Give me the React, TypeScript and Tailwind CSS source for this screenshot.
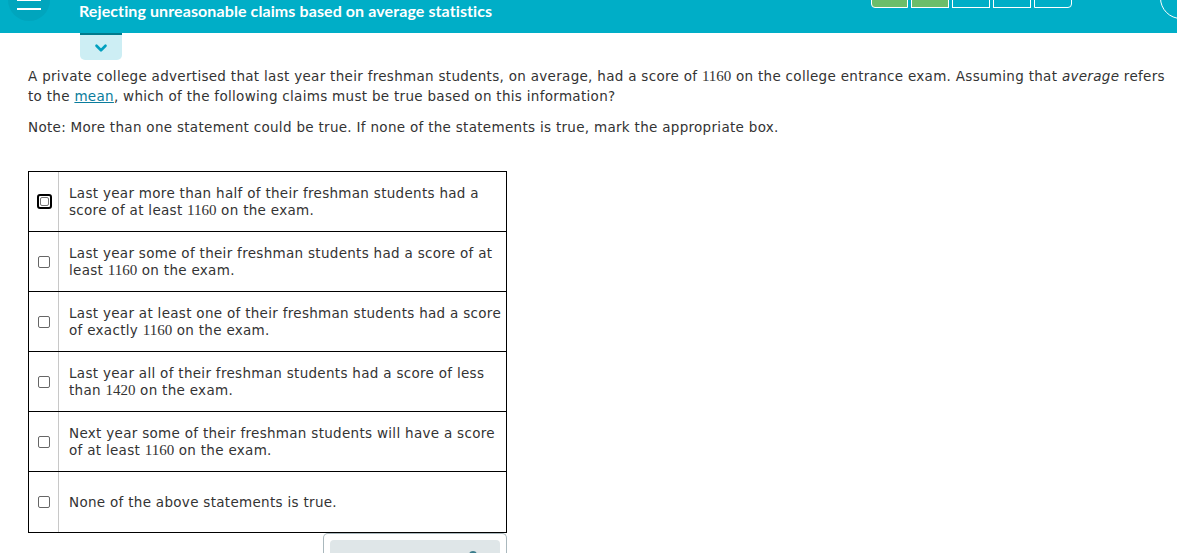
import { Fragment } from "react";
import { ChevronDown } from "lucide-react";

const choices = [
  { text: ["Last year more than half of their freshman students had a score of at least ", "1160", " on the exam."], focused: true },
  { text: ["Last year some of their freshman students had a score of at least ", "1160", " on the exam."] },
  { text: ["Last year at least one of their freshman students had a score of exactly ", "1160", " on the exam."] },
  { text: ["Last year all of their freshman students had a score of less than ", "1420", " on the exam."] },
  { text: ["Next year some of their freshman students will have a score of at least ", "1160", " on the exam."] },
  { text: ["None of the above statements is true."] },
];

const Num = ({ children }: { children: string }) => (
  <span className="font-['Liberation_Serif',serif] text-[15px] leading-none tracking-normal">{children}</span>
);

export default function App() {
  return (
    <div className="h-[553px] overflow-hidden bg-white font-['DejaVu_Sans','Verdana',sans-serif] text-[#333]">
      <header className="relative flex h-[33px] items-start overflow-hidden bg-[#00aec7]">
        <div className="ml-[8px] -mt-[21px] flex h-[42px] w-[42px] shrink-0 flex-col items-center justify-end gap-[7px] rounded-full bg-[#00a5bd] pb-[11px]">
          <span className="h-[2px] w-[24px] bg-white" />
          <span className="h-[2px] w-[24px] bg-white" />
        </div>
        <h1 className="ml-[29px] mt-[0px] font-['Lato',sans-serif] text-[16px] font-bold leading-[21px] tracking-[0.1px] text-white">
          Rejecting unreasonable claims based on average statistics
        </h1>
        <div className="ml-auto -mt-[1px] flex gap-[3px]">
          <span className="h-[9px] w-[37px] rounded-bl-[4px] border border-white bg-[#6bbe6a]" />
          <span className="h-[9px] w-[38px] border border-white bg-[#6bbe6a]" />
          <span className="h-[9px] w-[38px] border border-white" />
          <span className="h-[9px] w-[38px] border border-white" />
          <span className="h-[9px] w-[38px] rounded-br-[4px] border border-white" />
        </div>
        <div className="-mt-[23px] ml-[88px] -mr-[25px] h-[42px] w-[42px] shrink-0 rounded-full border border-white" />
      </header>

      <div className="ml-[80px] flex h-[27px] w-[42px] items-center justify-center rounded-b-[5px] border-t-2 border-[#007a8c] bg-[#cdeef4] text-[#00a0bf]">
        <ChevronDown size={18} strokeWidth={3.5} />
      </div>

      <div className="pl-[28px] pr-[4px] pt-[6px] text-[13.5px] leading-[20px] tracking-[0.3px]">
        <p>
          A private college advertised that last year their freshman students, on average, had a score of <Num>1160</Num> on
          the college entrance exam. Assuming that <i>average</i> refers to the{" "}
          <span className="text-[#0a7c9c] underline">mean</span>, which of the following claims must be true based on this
          information?
        </p>
        <p className="mt-[11px]">
          Note: More than one statement could be true. If none of the statements is true, mark the appropriate box.
        </p>

        <div className="mt-[34px] w-[479px]">
          <div className="border border-black">
            {choices.map((c, i) => (
              <div
                key={i}
                className={`flex ${i === 0 ? "h-[59px]" : i === choices.length - 1 ? "h-[61px] border-t border-black" : "h-[60px] border-t border-black"}`}
              >
                <div className="flex w-[30px] shrink-0 items-center justify-center border-r border-[#c8c8c8] pl-[1px]">
                  {c.focused ? (
                    <span className="h-[15px] w-[15px] rounded-[3px] border-2 border-black p-[1px]">
                      <span className="block h-full w-full rounded-[2px] border border-[#777]" />
                    </span>
                  ) : (
                    <span className="h-[12px] w-[12px] rounded-[2px] border border-[#666]" />
                  )}
                </div>
                <div className="flex items-center pl-[10px] pr-[4px] leading-[17px]">
                  <p>
                    {c.text.map((t, j) => (j === 1 ? <Num key={j}>{t}</Num> : <Fragment key={j}>{t}</Fragment>))}
                  </p>
                </div>
              </div>
            ))}
          </div>
          <div className="ml-auto w-[184px] rounded-t-[5px] border border-b-0 border-[#aab8bd] px-[6px] pt-[6px]">
            <div className="relative h-[20px] rounded-t-[4px] bg-[#dfe6e8]">
              <span className="absolute left-[139px] top-[11px] h-[8px] w-[8px] rounded-full bg-[#3a7d8c]" />
            </div>
          </div>
        </div>
      </div>
    </div>
  );
}
